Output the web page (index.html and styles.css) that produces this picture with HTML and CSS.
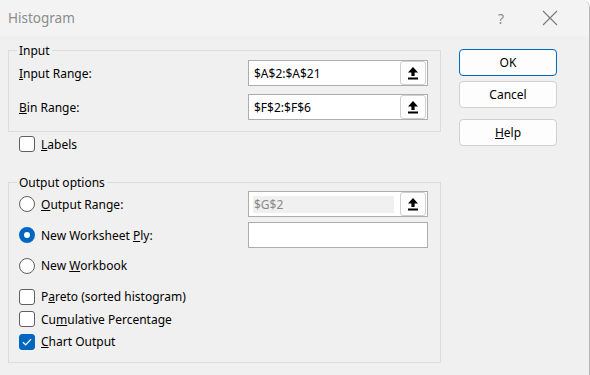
FILE: index.html
```html
<!DOCTYPE html>
<html lang="en">
<head>
  <meta charset="UTF-8">
  <title>Histogram</title>
  <link rel="stylesheet" href="styles.css">
</head>
<body>
  <div class="window">
    <!-- Titelleiste -->
    <div class="titlebar">
      <span class="title">Histogram</span>
      <span class="help-btn">?</span>
      <span class="close-btn">
        <svg width="16" height="16" viewBox="0 0 16 16"><path d="M1 1 L15 15 M15 1 L1 15" stroke="#7a7a7a" stroke-width="1.1" fill="none"/></svg>
      </span>
    </div>

    <div class="content">
      <div class="left">
        <fieldset class="group group-input">
          <legend>Input</legend>
          <div class="row">
            <label><u>I</u>nput Range:</label>
            <div class="refbox">
              <span class="reftext">$A$2:$A$21</span>
              <span class="refbtn"><svg width="12" height="14" viewBox="0 0 12 14"><path d="M6 1 L11 6.5 H7.6 V10 H4.4 V6.5 H1 Z" fill="#000"/><rect x="1" y="11.5" width="10" height="2" fill="#000"/></svg></span>
            </div>
          </div>
          <div class="row">
            <label><u>B</u>in Range:</label>
            <div class="refbox">
              <span class="reftext">$F$2:$F$6</span>
              <span class="refbtn"><svg width="12" height="14" viewBox="0 0 12 14"><path d="M6 1 L11 6.5 H7.6 V10 H4.4 V6.5 H1 Z" fill="#000"/><rect x="1" y="11.5" width="10" height="2" fill="#000"/></svg></span>
            </div>
          </div>
        </fieldset>

        <div class="check-row labels-row">
          <span class="checkbox"></span>
          <span><u>L</u>abels</span>
        </div>

        <fieldset class="group group-output">
          <legend>Output options</legend>
          <div class="row opt-row">
            <div class="radio-item"><span class="radio"></span><span><u>O</u>utput Range:</span></div>
            <div class="refbox disabled">
              <span class="reftext">$G$2</span>
              <span class="refbtn"><svg width="12" height="14" viewBox="0 0 12 14"><path d="M6 1 L11 6.5 H7.6 V10 H4.4 V6.5 H1 Z" fill="#000"/><rect x="1" y="11.5" width="10" height="2" fill="#000"/></svg></span>
            </div>
          </div>
          <div class="row opt-row">
            <div class="radio-item"><span class="radio checked"></span><span>New Worksheet <u>P</u>ly:</span></div>
            <div class="refbox"></div>
          </div>
          <div class="radio-item workbook"><span class="radio"></span><span>New <u>W</u>orkbook</span></div>

          <div class="checks">
            <div class="check-row"><span class="checkbox"></span><span>P<u>a</u>reto (sorted histogram)</span></div>
            <div class="check-row"><span class="checkbox"></span><span>Cu<u>m</u>ulative Percentage</span></div>
            <div class="check-row">
              <span class="checkbox checked"><svg width="10" height="8" viewBox="0 0 10 8"><path d="M1 4.2 L3.7 6.8 L9 1.2" stroke="#fff" stroke-width="1.2" fill="none"/></svg></span>
              <span><u>C</u>hart Output</span>
            </div>
          </div>
        </fieldset>
      </div>

      <div class="buttons">
        <button class="btn default">OK</button>
        <button class="btn">Cancel</button>
        <button class="btn help"><u>H</u>elp</button>
      </div>
    </div>
  </div>
</body>
</html>
```

FILE: styles.css
```css
body {
  margin: 0;
  background: #fff;
  font-family: "Noto Sans", "Open Sans", sans-serif;
  font-size: 12px;
  color: #000;
}
.window {
  width: 589px;
  height: 375px;
  background: #f0f0f0;
  border-right: 1px solid #b8b8b8;
  border-top-right-radius: 8px;
  overflow: hidden;
}
.titlebar {
  height: 36px;
  background: #f3f3f3;
  display: flex;
  align-items: center;
}
.title {
  margin-left: 8px;
  font-size: 13.5px;
  color: #8c8c8c;
  flex: 1;
}
.help-btn {
  color: #8c8c8c;
  font-size: 14px;
  margin-right: 38px;
}
.close-btn {
  display: flex;
  margin-right: 31px;
}
.content {
  display: flex;
  padding: 6px 0 0 8px;
}
.left {
  width: 433px;
}
.group {
  margin: 0;
  border: 1px solid #dcdcdc;
  padding: 0 12px 0 10px;
}
.group legend {
  padding: 0 2px;
  margin-left: -2px;
  color: #000;
}
.group-input {
  padding-top: 1px;
  padding-bottom: 3px;
}
.row {
  display: flex;
  align-items: center;
  justify-content: space-between;
  margin-bottom: 8px;
}
.refbox {
  width: 178px;
  height: 24px;
  border: 1px solid #adadad;
  background: #fff;
  display: flex;
  align-items: center;
  justify-content: space-between;
}
.reftext {
  padding-left: 5px;
}
.refbox.disabled .reftext {
  color: #8a8a8a;
  background: #f0f0f0;
  flex: 1;
  margin: 3px 0 3px 4px;
  padding-left: 1px;
  height: 17px;
  line-height: 17px;
}
.refbtn {
  width: 24px;
  height: 22px;
  margin-right: 1px;
  border: 1px solid #d0d0d0;
  border-radius: 3px;
  background: #fdfdfd;
  display: flex;
  align-items: center;
  justify-content: center;
}
.refbox.disabled .refbtn {
  margin-left: 6px;
}
.check-row {
  display: flex;
  align-items: center;
  gap: 6px;
}
.labels-row {
  margin: 2px 0 0 11px;
  height: 20px;
}
.checkbox {
  width: 14px;
  height: 14px;
  border: 1px solid #5f5f5f;
  border-radius: 3px;
  background: #fff;
  display: flex;
  align-items: center;
  justify-content: center;
}
.checkbox.checked {
  background: #0067c0;
  border-color: #0067c0;
}
.group-output {
  margin-top: 20px;
  padding-top: 0;
  padding-bottom: 12px;
}
.opt-row {
  margin-bottom: 5px;
}
.radio-item {
  display: flex;
  align-items: center;
  gap: 6px;
}
.radio {
  width: 14px;
  height: 14px;
  border: 1px solid #5f5f5f;
  border-radius: 50%;
  background: #fff;
  box-sizing: content-box;
}
.radio.checked {
  width: 6px;
  height: 6px;
  border: 5px solid #0067c0;
  background: #fff;
}
.workbook {
  margin-top: 9px;
}
.checks {
  margin-top: 14px;
  display: flex;
  flex-direction: column;
  gap: 5.5px;
}
.checks .check-row {
  height: 17px;
}
.buttons {
  display: flex;
  flex-direction: column;
  margin-left: 18px;
  margin-top: 7px;
}
.btn {
  width: 98px;
  height: 27px;
  margin-bottom: 5px;
  font-family: inherit;
  font-size: 12px;
  color: #000;
  background: #fdfdfd;
  border: 1px solid #d0d0d0;
  border-radius: 4px;
}
.btn.default {
  border-color: #0067c0;
}
.btn.help {
  margin-top: 6px;
}
```
